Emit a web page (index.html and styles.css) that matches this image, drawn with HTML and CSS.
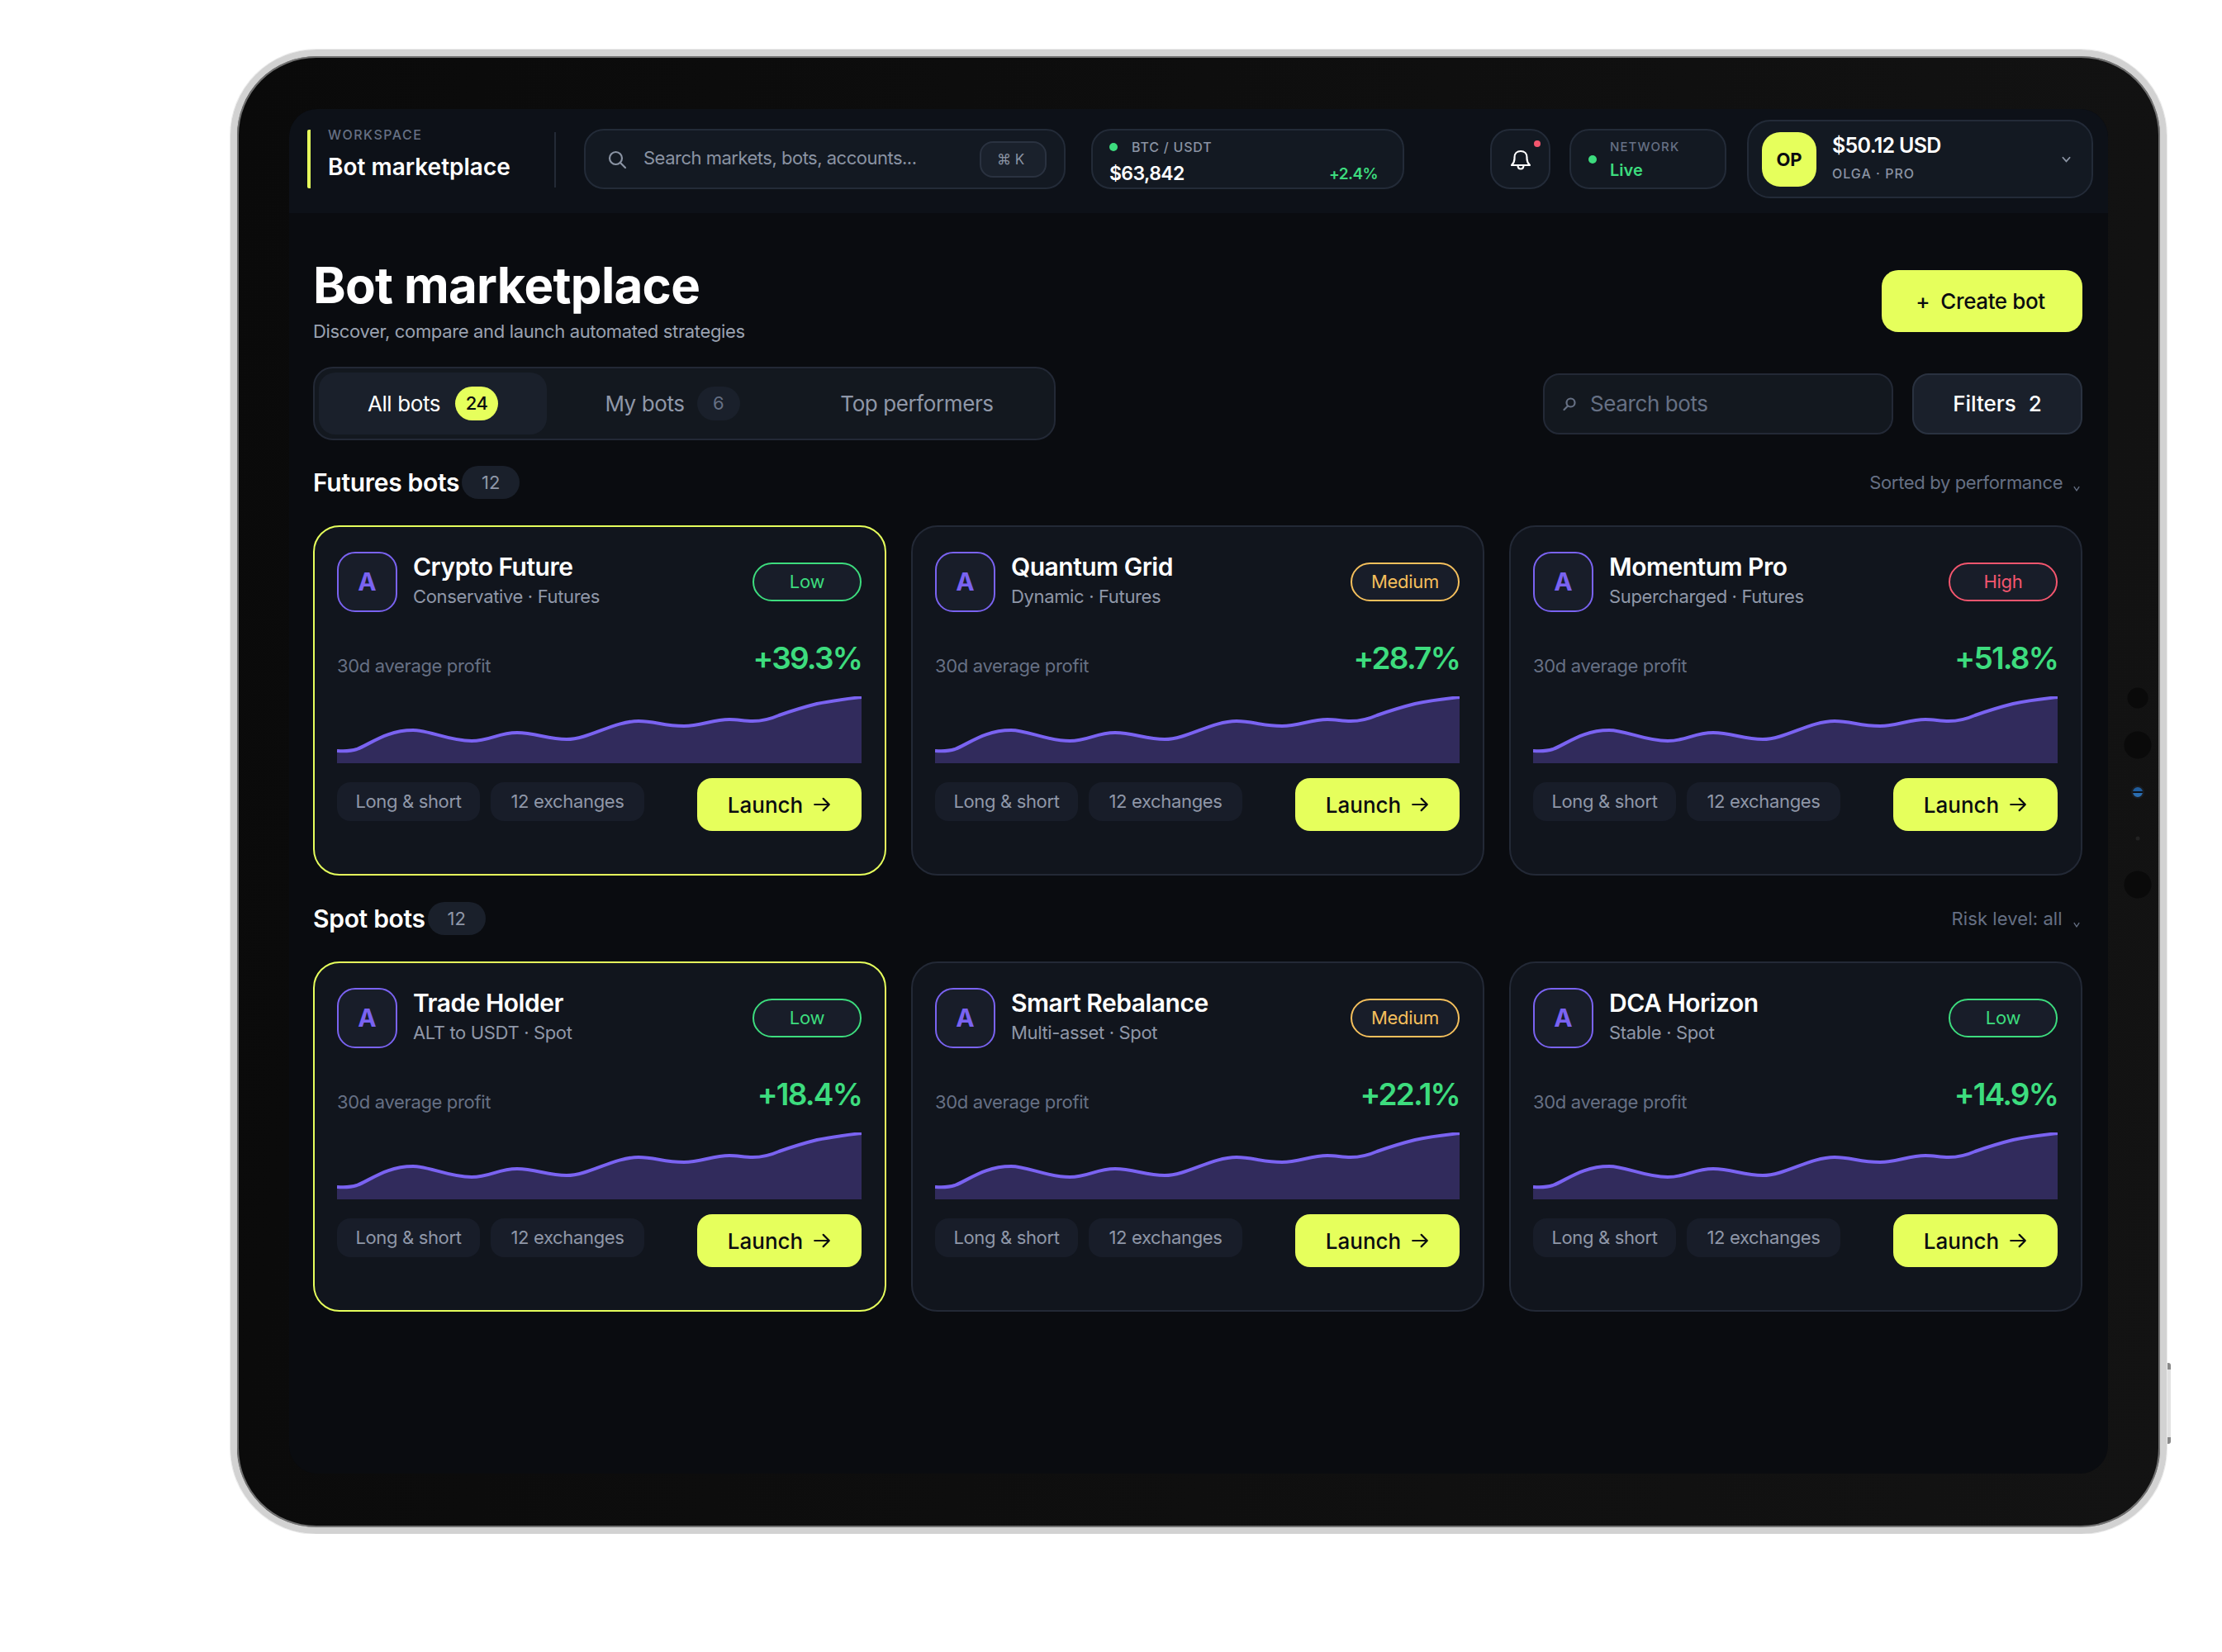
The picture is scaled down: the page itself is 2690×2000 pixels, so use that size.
FILE: index.html
```html
<!DOCTYPE html>
<html lang="en">
<head>
    <meta charset="UTF-8">
    <meta name="viewport" content="width=device-width, initial-scale=1.0">
    <title>Bot marketplace</title>
    <link rel="stylesheet" href="styles.css">
</head>
<body>
    <svg class="defs" aria-hidden="true">
        <symbol id="spark" viewBox="0 0 635 81" preserveAspectRatio="none">
            <path class="spark-fill" d="M0 66 C8 66.5 15 67 24 64 C40 58 60 41 92 41 C112 41 135 54 163 54 C185 54 195 44 218 44 C240 44 255 52 278 52 C305 52 335 30 365 30 C385 30 395 36 420 36 C440 36 455 28 475 28 C485 28 493 30 503 30 C517 30 526 27 535 23 C552 17 565 13 581 9 C600 5 618 3 635 1 L635 81 L0 81 Z"/>
            <path class="spark-line" d="M0 66 C8 66.5 15 67 24 64 C40 58 60 41 92 41 C112 41 135 54 163 54 C185 54 195 44 218 44 C240 44 255 52 278 52 C305 52 335 30 365 30 C385 30 395 36 420 36 C440 36 455 28 475 28 C485 28 493 30 503 30 C517 30 526 27 535 23 C552 17 565 13 581 9 C600 5 618 3 635 1"/>
        </symbol>
        <symbol id="arrow" viewBox="0 0 20 20">
            <path d="M2 10 H18 M11.5 3.5 L18 10 L11.5 16.5" fill="none" stroke="currentColor" stroke-width="2" stroke-linecap="round" stroke-linejoin="round"/>
        </symbol>
    </svg>

    <div class="device">
        <span class="side-button"></span>
        <span class="bottom-button bottom-one"></span>
        <span class="bottom-button bottom-two"></span>

        <span class="sensor sensor-a"></span>
        <span class="sensor sensor-b"></span>
        <span class="sensor camera"></span>
        <span class="sensor pinhole"></span>
        <span class="sensor sensor-c"></span>

        <div class="screen">
            <header class="topbar">
                <div class="brand">
                    <div class="brand-label">WORKSPACE</div>
                    <div class="brand-name">Bot marketplace</div>
                </div>
                <div class="global-search">
                    <svg class="search-icon" viewBox="0 0 24 24">
                        <circle cx="10.5" cy="10.5" r="7.5"/>
                        <path d="M16 16 L22 22"/>
                    </svg>
                    <span class="search-text">Search markets, bots, accounts...</span>
                    <span class="kbd">⌘ K</span>
                </div>
                <div class="ticker">
                    <div class="ticker-label"><span class="dot"></span>BTC / USDT</div>
                    <div class="ticker-row">
                        <span class="ticker-price">$63,842</span>
                        <span class="ticker-change">+2.4%</span>
                    </div>
                </div>
                <div class="bell">
                    <svg class="bell-icon" viewBox="0 0 26 26">
                        <path d="M2 20 H24 C22 18 20.5 16.5 20.5 12 V10.5 C20.5 6 17.5 3 13 3 C8.5 3 5.5 6 5.5 10.5 V12 C5.5 16.5 4 18 2 20 Z"/>
                        <path d="M9.5 20 C9.5 23 11 24.5 13 24.5 C15 24.5 16.5 23 16.5 20"/>
                    </svg>
                    <span class="bell-dot"></span>
                </div>
                <div class="network">
                    <span class="dot"></span>
                    <div>
                        <div class="network-label">NETWORK</div>
                        <div class="network-value">Live</div>
                    </div>
                </div>
                <div class="account">
                    <div class="account-avatar">OP</div>
                    <div class="account-info">
                        <div class="account-balance">$50.12 USD</div>
                        <div class="account-name">OLGA · PRO</div>
                    </div>
                    <svg class="account-caret" viewBox="0 0 12 8">
                        <path d="M1 1 L6 6.5 L11 1"/>
                    </svg>
                </div>
            </header>

            <main class="content">
                <div class="page-head">
                    <div>
                        <h1>Bot marketplace</h1>
                        <p class="page-sub">Discover, compare and launch automated strategies</p>
                    </div>
                    <button class="create-btn"><span class="plus">+</span>Create bot</button>
                </div>

                <div class="toolbar">
                    <div class="tabs">
                        <div class="tab active">All bots <span class="tab-count">24</span></div>
                        <div class="tab">My bots <span class="tab-count">6</span></div>
                        <div class="tab tab-wide">Top performers</div>
                    </div>
                    <div class="toolbar-right">
                        <div class="bots-search">
                            <svg class="bots-search-icon" viewBox="0 0 18 18">
                                <circle cx="10.5" cy="7.5" r="5"/>
                                <path d="M7 11.5 L2.5 16"/>
                            </svg>
                            Search bots
                        </div>
                        <button class="filters-btn">Filters <span>2</span></button>
                    </div>
                </div>

                <div class="section-head">
                    <h2>Futures bots</h2>
                    <span class="section-count">12</span>
                    <span class="section-note">Sorted by performance
                        <svg class="note-caret" viewBox="0 0 10 8"><path d="M1 1 L5 7 L9 1"/></svg>
                    </span>
                </div>
                <div class="cards">
                    <article class="card selected">
                        <div class="card-top">
                            <div class="bot-avatar">A</div>
                            <div class="bot-info">
                                <h3>Crypto Future</h3>
                                <p>Conservative · Futures</p>
                            </div>
                            <span class="risk low">Low</span>
                        </div>
                        <div class="metric">
                            <span class="metric-label">30d average profit</span>
                            <span class="metric-value">+39.3%</span>
                        </div>
                        <svg class="spark"><use href="#spark"/></svg>
                        <div class="card-foot">
                            <span class="chip chip-pair">Long &amp; short</span>
                            <span class="chip chip-count">12 exchanges</span>
                            <button class="launch-btn">Launch <svg class="arrow"><use href="#arrow"/></svg></button>
                        </div>
                    </article>
                    <article class="card">
                        <div class="card-top">
                            <div class="bot-avatar">A</div>
                            <div class="bot-info">
                                <h3>Quantum Grid</h3>
                                <p>Dynamic · Futures</p>
                            </div>
                            <span class="risk medium">Medium</span>
                        </div>
                        <div class="metric">
                            <span class="metric-label">30d average profit</span>
                            <span class="metric-value">+28.7%</span>
                        </div>
                        <svg class="spark"><use href="#spark"/></svg>
                        <div class="card-foot">
                            <span class="chip chip-pair">Long &amp; short</span>
                            <span class="chip chip-count">12 exchanges</span>
                            <button class="launch-btn">Launch <svg class="arrow"><use href="#arrow"/></svg></button>
                        </div>
                    </article>
                    <article class="card">
                        <div class="card-top">
                            <div class="bot-avatar">A</div>
                            <div class="bot-info">
                                <h3>Momentum Pro</h3>
                                <p>Supercharged · Futures</p>
                            </div>
                            <span class="risk high">High</span>
                        </div>
                        <div class="metric">
                            <span class="metric-label">30d average profit</span>
                            <span class="metric-value">+51.8%</span>
                        </div>
                        <svg class="spark"><use href="#spark"/></svg>
                        <div class="card-foot">
                            <span class="chip chip-pair">Long &amp; short</span>
                            <span class="chip chip-count">12 exchanges</span>
                            <button class="launch-btn">Launch <svg class="arrow"><use href="#arrow"/></svg></button>
                        </div>
                    </article>
                </div>

                <div class="section-head">
                    <h2>Spot bots</h2>
                    <span class="section-count">12</span>
                    <span class="section-note note-loose">Risk level: all
                        <svg class="note-caret" viewBox="0 0 10 8"><path d="M1 1 L5 7 L9 1"/></svg>
                    </span>
                </div>
                <div class="cards">
                    <article class="card selected">
                        <div class="card-top">
                            <div class="bot-avatar">A</div>
                            <div class="bot-info">
                                <h3>Trade Holder</h3>
                                <p>ALT to USDT · Spot</p>
                            </div>
                            <span class="risk low">Low</span>
                        </div>
                        <div class="metric">
                            <span class="metric-label">30d average profit</span>
                            <span class="metric-value">+18.4%</span>
                        </div>
                        <svg class="spark"><use href="#spark"/></svg>
                        <div class="card-foot">
                            <span class="chip chip-pair">Long &amp; short</span>
                            <span class="chip chip-count">12 exchanges</span>
                            <button class="launch-btn">Launch <svg class="arrow"><use href="#arrow"/></svg></button>
                        </div>
                    </article>
                    <article class="card">
                        <div class="card-top">
                            <div class="bot-avatar">A</div>
                            <div class="bot-info">
                                <h3>Smart Rebalance</h3>
                                <p>Multi-asset · Spot</p>
                            </div>
                            <span class="risk medium">Medium</span>
                        </div>
                        <div class="metric">
                            <span class="metric-label">30d average profit</span>
                            <span class="metric-value">+22.1%</span>
                        </div>
                        <svg class="spark"><use href="#spark"/></svg>
                        <div class="card-foot">
                            <span class="chip chip-pair">Long &amp; short</span>
                            <span class="chip chip-count">12 exchanges</span>
                            <button class="launch-btn">Launch <svg class="arrow"><use href="#arrow"/></svg></button>
                        </div>
                    </article>
                    <article class="card">
                        <div class="card-top">
                            <div class="bot-avatar">A</div>
                            <div class="bot-info">
                                <h3>DCA Horizon</h3>
                                <p>Stable · Spot</p>
                            </div>
                            <span class="risk low">Low</span>
                        </div>
                        <div class="metric">
                            <span class="metric-label">30d average profit</span>
                            <span class="metric-value">+14.9%</span>
                        </div>
                        <svg class="spark"><use href="#spark"/></svg>
                        <div class="card-foot">
                            <span class="chip chip-pair">Long &amp; short</span>
                            <span class="chip chip-count">12 exchanges</span>
                            <button class="launch-btn">Launch <svg class="arrow"><use href="#arrow"/></svg></button>
                        </div>
                    </article>
                </div>
            </main>
        </div>
    </div>
</body>
</html>
```

FILE: styles.css
```css
* {
    box-sizing: border-box;
}

body {
    margin: 0;
    background-color: #fff;
    font-family: Inter, "DejaVu Sans", sans-serif;
    color: #fff;
}

.defs {
    display: none;
}

/* Tablet frame */
.device {
    position: relative;
    width: 2344px;
    height: 1797px;
    margin: 60px 0 0 279px;
    padding: 64px 63px 65px;
    border: 8px solid #d2d2d2;
    border-radius: 104px;
    background: linear-gradient(100deg, #0a0a0a, #131313);
    box-shadow: inset 0 0 0 2px #707070, 0 0 0 1px #ececec;
}

.side-button {
    position: absolute;
    right: -13px;
    top: 1582px;
    width: 4px;
    height: 98px;
    background: linear-gradient(#8a8a8a 0 8px, #e2e2e2 8px 90px, #8a8a8a 90px);
    border-radius: 0 3px 3px 0;
}

.bottom-button {
    position: absolute;
    bottom: -12px;
    width: 83px;
    height: 4px;
    background: linear-gradient(90deg, #8a8a8a 0 8px, #e2e2e2 8px 75px, #8a8a8a 75px);
    border-radius: 0 0 3px 3px;
}

.bottom-one {
    left: 1990px;
}

.bottom-two {
    left: 2091px;
}

.sensor {
    position: absolute;
    left: 2301px;
    border-radius: 50%;
    background-color: #0a0a0a;
    transform: translate(-50%, -50%);
}

.sensor-a {
    top: 777px;
    width: 25px;
    height: 25px;
}

.sensor-b {
    top: 834px;
    width: 33px;
    height: 33px;
}

.camera {
    top: 891px;
    width: 16px;
    height: 16px;
    background: linear-gradient(#1f5c9c 40%, #0d1117 40% 58%, #2a6db0 58%);
    border: 2px solid #1a1d22;
}

.pinhole {
    top: 947px;
    width: 5px;
    height: 5px;
    background-color: #222;
}

.sensor-c {
    top: 1003px;
    width: 33px;
    height: 33px;
}

.screen {
    height: 100%;
    background-color: #0a0c10;
    border-radius: 34px;
    overflow: hidden;
}

/* Top bar */
.topbar {
    display: flex;
    align-items: center;
    height: 126px;
    padding: 13px 18px 18px 22px;
    background-color: #0d1118;
}

.brand {
    width: 301px;
    height: 71px;
    padding-left: 21px;
    border-left: 4px solid #e6ff5c;
    border-radius: 2px;
    position: relative;
}

.brand::after {
    content: "";
    position: absolute;
    right: 0;
    top: 3px;
    bottom: 1px;
    width: 2px;
    background-color: #232a36;
}

.brand-label {
    font-size: 16px;
    line-height: 12px;
    letter-spacing: 1.5px;
    color: #667084;
    font-weight: 500;
}

.brand-name {
    margin-top: 15px;
    font-size: 28px;
    line-height: 36px;
    font-weight: 600;
}

.global-search {
    display: flex;
    align-items: center;
    width: 583px;
    height: 73px;
    margin-left: 34px;
    padding: 0 21px 0 26px;
    background-color: #131922;
    border: 2px solid #232b38;
    border-radius: 24px;
}

.search-icon {
    width: 24px;
    height: 24px;
    fill: none;
    stroke: #8a93a3;
    stroke-width: 2.2;
    stroke-linecap: round;
}

.search-text {
    flex: 1;
    margin: 0 0 3px 20px;
    font-size: 22px;
    letter-spacing: -0.5px;
    color: #8a93a3;
}

.kbd {
    width: 81px;
    height: 44px;
    padding: 0 0 0 19px;
    background-color: #1a212c;
    border: 2px solid #2a3240;
    border-radius: 16px;
    font-size: 17px;
    line-height: 40px;
    color: #8a93a3;
}

.ticker {
    width: 379px;
    height: 73px;
    margin-left: 31px;
    padding: 9px 30px 0 20px;
    background-color: #131922;
    border: 2px solid #232b38;
    border-radius: 24px;
}

.dot {
    display: inline-block;
    width: 10px;
    height: 10px;
    flex-shrink: 0;
    border-radius: 50%;
    background-color: #3ddc7e;
}

.ticker-label {
    display: flex;
    align-items: center;
    gap: 17px;
    font-size: 16px;
    line-height: 22px;
    letter-spacing: 0.8px;
    color: #8a93a3;
    font-weight: 500;
}

.ticker-row {
    display: flex;
    justify-content: space-between;
    align-items: center;
    margin-top: 7px;
}

.ticker-price {
    font-size: 23px;
    font-weight: 600;
    letter-spacing: -0.6px;
}

.ticker-change {
    font-size: 19px;
    font-weight: 600;
    letter-spacing: -0.6px;
    color: #3ddc7e;
}

.bell {
    position: relative;
    display: flex;
    align-items: center;
    justify-content: center;
    width: 73px;
    height: 73px;
    margin-left: auto;
    background-color: #131922;
    border: 2px solid #232b38;
    border-radius: 24px;
}

.bell-icon {
    width: 26px;
    height: 26px;
    fill: none;
    stroke: #fff;
    stroke-width: 2.2;
    stroke-linejoin: round;
}

.bell-dot {
    position: absolute;
    top: 12px;
    right: 10px;
    width: 8px;
    height: 8px;
    border-radius: 50%;
    background-color: #f4566e;
}

.network {
    display: flex;
    align-items: center;
    gap: 16px;
    width: 190px;
    height: 73px;
    margin-left: 23px;
    padding-left: 21px;
    background-color: #131922;
    border: 2px solid #232b38;
    border-radius: 24px;
}

.network-label {
    font-size: 15px;
    line-height: 20px;
    letter-spacing: 1.1px;
    color: #667084;
    font-weight: 500;
}

.network-value {
    margin-top: 6px;
    font-size: 20px;
    line-height: 24px;
    font-weight: 600;
    color: #3ddc7e;
}

.account {
    display: flex;
    align-items: center;
    width: 419px;
    height: 95px;
    margin-left: 25px;
    padding-left: 16px;
    background-color: #131922;
    border: 2px solid #232b38;
    border-radius: 28px;
}

.account-avatar {
    display: flex;
    align-items: center;
    justify-content: center;
    width: 66px;
    height: 66px;
    background-color: #e6ff5c;
    border-radius: 22px;
    color: #0a0c10;
    font-size: 22px;
    font-weight: 700;
}

.account-info {
    flex: 1;
    margin: 0 0 6px 19px;
}

.account-balance {
    font-size: 25px;
    line-height: 32px;
    font-weight: 600;
    letter-spacing: -0.7px;
}

.account-name {
    margin-top: 8px;
    font-size: 16px;
    line-height: 20px;
    letter-spacing: 1px;
    color: #8a93a3;
    font-weight: 500;
}

.account-caret {
    width: 11px;
    height: 8px;
    margin-right: 25px;
    fill: none;
    stroke: #8a93a3;
    stroke-width: 2;
}

/* Page content */
.content {
    padding: 53px 31px 0 29px;
}

.page-head {
    display: flex;
    justify-content: space-between;
    align-items: flex-start;
}

h1 {
    margin: 0;
    font-size: 60px;
    line-height: 68px;
    font-weight: 700;
    letter-spacing: -0.7px;
}

.page-sub {
    margin: 7px 0 0;
    font-size: 22px;
    line-height: 30px;
    letter-spacing: -0.35px;
    color: #9aa2b1;
}

.create-btn {
    width: 243px;
    height: 75px;
    margin-top: 16px;
    padding-right: 10px;
    background-color: #e6ff5c;
    border: none;
    border-radius: 20px;
    color: #0a0c10;
    font-family: inherit;
    font-size: 26px;
    font-weight: 500;
    letter-spacing: -0.4px;
}

.plus {
    margin-right: 13px;
}

.toolbar {
    display: flex;
    justify-content: space-between;
    align-items: center;
    margin-top: 28px;
}

.tabs {
    display: flex;
    gap: 14px;
    width: 899px;
    height: 89px;
    padding: 5px;
    background-color: #13181f;
    border: 2px solid #232936;
    border-radius: 24px;
}

.tab {
    display: flex;
    align-items: center;
    justify-content: center;
    gap: 15px;
    width: 276px;
    border-radius: 20px;
    font-size: 26px;
    letter-spacing: -0.4px;
    color: #8f97a8;
}

.tab-wide {
    width: 288px;
}

.tab.active {
    gap: 18px;
    background-color: #1a202b;
    color: #fff;
}

.tab-count {
    width: 52px;
    height: 41px;
    background-color: #1a202b;
    border-radius: 21px;
    text-align: center;
    font-size: 22px;
    line-height: 41px;
    color: #667084;
}

.tab.active .tab-count {
    background-color: #e6ff5c;
    color: #0a0c10;
    font-weight: 500;
}

.toolbar-right {
    display: flex;
    gap: 23px;
}

.bots-search {
    display: flex;
    align-items: center;
    gap: 16px;
    width: 424px;
    height: 74px;
    padding-left: 21px;
    background-color: #13181f;
    border: 2px solid #232936;
    border-radius: 20px;
    font-size: 26px;
    letter-spacing: -0.4px;
    color: #667084;
}

.bots-search-icon {
    width: 18px;
    height: 18px;
    fill: none;
    stroke: #667084;
    stroke-width: 2.2;
    stroke-linecap: round;
}

.filters-btn {
    width: 206px;
    height: 74px;
    background-color: #1a202b;
    border: 2px solid #2a3240;
    border-radius: 20px;
    color: #fff;
    font-family: inherit;
    font-size: 26px;
    font-weight: 500;
}

.filters-btn span {
    margin-left: 8px;
}

.section-head {
    display: flex;
    align-items: center;
    height: 40px;
    margin-top: 32px;
}

.toolbar + .section-head {
    margin-top: 31px;
}

h2 {
    margin: 0;
    font-size: 30px;
    font-weight: 600;
    letter-spacing: -0.3px;
}

.section-count {
    width: 70px;
    height: 40px;
    margin-left: 3px;
    background-color: #1a202b;
    border-radius: 20px;
    text-align: center;
    font-size: 22px;
    line-height: 40px;
    color: #8f97a8;
}

.section-note {
    margin-left: auto;
    font-size: 22px;
    letter-spacing: -0.35px;
    color: #667084;
}

.note-loose {
    letter-spacing: 0.1px;
}

.note-caret {
    width: 8px;
    height: 7px;
    margin: 0 3px 0 7px;
    fill: none;
    stroke: #667084;
    stroke-width: 1.6;
    vertical-align: -3px;
}

/* Bot cards */
.cards {
    display: grid;
    grid-template-columns: repeat(3, 694px);
    gap: 30px;
    margin-top: 32px;
}

.card {
    height: 424px;
    padding: 30px 28px 30px 27px;
    background-color: #11151d;
    border: 2px solid #232936;
    border-radius: 32px;
}

.card.selected {
    border-color: #e6ff5c;
}

.card-top {
    display: flex;
    align-items: center;
    height: 73px;
}

.bot-avatar {
    width: 73px;
    height: 73px;
    background-color: #181d29;
    border: 2px solid #7a63f1;
    border-radius: 22px;
    text-align: center;
    font-size: 30px;
    line-height: 69px;
    font-weight: 700;
    color: #7a63f1;
}

.bot-info {
    flex: 1;
    align-self: flex-start;
    margin-left: 19px;
}

.bot-info h3 {
    margin: 0;
    font-size: 30px;
    line-height: 36px;
    font-weight: 600;
    letter-spacing: -0.5px;
}

.bot-info p {
    margin: 4px 0 0;
    font-size: 22px;
    line-height: 28px;
    letter-spacing: -0.35px;
    color: #8f97a8;
}

.risk {
    width: 132px;
    height: 47px;
    background-color: #181d29;
    border: 2px solid;
    border-radius: 24px;
    text-align: center;
    font-size: 22px;
    line-height: 43px;
    letter-spacing: -0.3px;
}

.risk.low {
    color: #3ddc7e;
}

.risk.medium {
    color: #f4bf5c;
}

.risk.high {
    color: #f4566e;
}

.metric {
    display: flex;
    justify-content: space-between;
    align-items: flex-end;
    margin-top: 34px;
}

.metric-label {
    font-size: 22px;
    line-height: 26px;
    letter-spacing: -0.35px;
    color: #667084;
}

.metric-value {
    font-size: 37px;
    line-height: 44px;
    font-weight: 600;
    color: #3ddc7e;
    letter-spacing: -1.8px;
}

.spark {
    display: block;
    width: 100%;
    height: 81px;
    margin-top: 24px;
}

.spark-fill {
    fill: #312b5c;
}

.spark-line {
    fill: none;
    stroke: #7a63f1;
    stroke-width: 4;
}

.card-foot {
    display: flex;
    align-items: flex-start;
    margin-top: 18px;
}

.chip {
    height: 47px;
    margin-top: 5px;
    background-color: #181d29;
    border-radius: 16px;
    text-align: center;
    font-size: 22px;
    line-height: 47px;
    letter-spacing: -0.35px;
    color: #8f97a8;
}

.chip-pair {
    width: 173px;
}

.chip-count {
    width: 186px;
    margin-left: 13px;
}

.launch-btn {
    display: flex;
    align-items: center;
    justify-content: center;
    gap: 12px;
    width: 199px;
    height: 64px;
    margin-left: auto;
    background-color: #e6ff5c;
    border: none;
    border-radius: 18px;
    color: #0a0c10;
    font-family: inherit;
    font-size: 26px;
    font-weight: 500;
}

.arrow {
    width: 22px;
    height: 22px;
}
```
